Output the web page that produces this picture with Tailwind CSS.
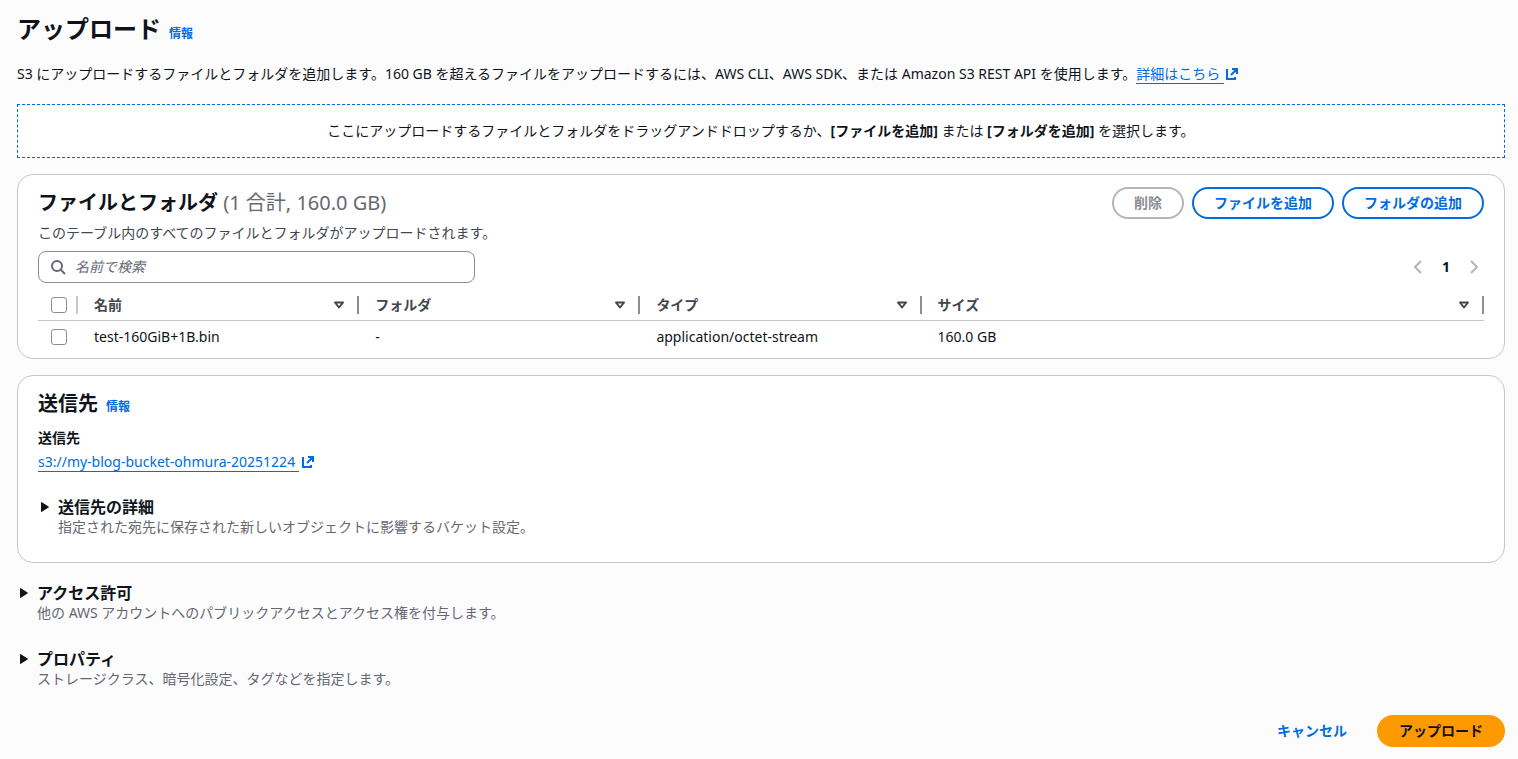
<!DOCTYPE html>
<html lang="ja">
<head>
<meta charset="utf-8">
<meta name="viewport" content="width=device-width, initial-scale=1">
<title>アップロード</title>
<script src="https://cdn.jsdelivr.net/npm/@tailwindcss/browser@4"></script>
</head>
<body class="min-h-screen bg-[#fcfcfd] pl-[17px] pr-[13px] pb-3 font-['Noto_Sans','Noto_Sans_CJK_JP',sans-serif] text-sm leading-5 text-[#0f141a]">
<svg class="hidden">
  <symbol id="external" viewBox="0 0 14 14"><path d="M7 2h5v5M12 2 6 8M3 3H2v9h8v-2" fill="none" stroke="currentColor" stroke-width="2"/></symbol>
  <symbol id="sort" viewBox="0 0 16 16"><path d="M4 5.5h8l-4 5z" fill="none" stroke="currentColor" stroke-width="2" stroke-linejoin="round"/></symbol>
  <symbol id="caret" viewBox="0 0 16 16"><path d="M3.500 3.500v9l7-4.500z" fill="currentColor" stroke="currentColor" stroke-linejoin="round"/></symbol>
</svg>
<main>
  <header class="flex items-baseline gap-2 pt-[13px]">
    <h1 class="text-2xl leading-8 font-bold">アップロード</h1>
    <a href="#" class="text-xs font-semibold text-[#006ce0]">情報</a>
  </header>
  <p class="mt-[19px]">S3 にアップロードするファイルとフォルダを追加します。160 GB を超えるファイルをアップロードするには、AWS CLI、AWS SDK、または Amazon S3 REST API を使用します。<a href="#" class="inline-flex items-center text-[#006ce0]"><span class="border-b border-current pr-1 leading-[18px]">詳細はこちら</span><svg class="mb-[2px] ml-px size-3.5"><use href="#external"/></svg></a></p>

  <div class="mt-5 border border-dashed border-[#006ce0] bg-white py-4 text-center">ここにアップロードするファイルとフォルダをドラッグアンドドロップするか、<b>[ファイルを追加]</b> または <b>[フォルダを追加]</b> を選択します。</div>

  <section class="mt-4 rounded-2xl border border-[#c6c6cd] bg-white px-5 pt-3 pb-[5px]">
    <div class="flex items-center justify-between">
      <h2 class="text-xl leading-8 font-bold">ファイルとフォルダ <span class="font-normal text-[#656871]">(1 合計, 160.0 GB)</span></h2>
      <div class="flex gap-2 font-bold">
        <button disabled class="h-8 rounded-full border-2 border-[#b4b4bb] px-5 text-[#8c8c94]">削除</button>
        <button class="h-8 rounded-full border-2 border-[#006ce0] px-5 text-[#006ce0]">ファイルを追加</button>
        <button class="h-8 rounded-full border-2 border-[#006ce0] px-5 text-[#006ce0]">フォルダの追加</button>
      </div>
    </div>
    <p class="mt-1 text-[#424650]">このテーブル内のすべてのファイルとフォルダがアップロードされます。</p>
    <div class="mt-2 flex items-center justify-between">
      <label class="flex h-8 w-[437px] items-center gap-2 rounded-lg border border-[#8c8c94] bg-white px-3">
        <svg class="size-4 shrink-0 text-[#656871]" viewBox="0 0 16 16" fill="none" stroke="currentColor" stroke-width="2"><circle cx="6" cy="7" r="5"/><path d="m9.5 10.500 4.500 4.500"/></svg>
        <input type="search" aria-label="名前で検索" placeholder="名前で検索" class="min-w-0 flex-1 outline-none placeholder:italic placeholder:text-[#656871]">
      </label>
      <nav class="flex items-center" aria-label="ページ">
        <button disabled aria-label="前のページ" class="px-1 text-[#b4b4bb]"><svg class="size-4" viewBox="0 0 16 16" fill="none" stroke="currentColor" stroke-width="2"><path d="m11 2-6 6 6 6"/></svg></button>
        <button aria-current="page" class="w-8 font-bold">1</button>
        <button disabled aria-label="次のページ" class="pl-1 pr-[2px] text-[#b4b4bb]"><svg class="size-4" viewBox="0 0 16 16" fill="none" stroke="currentColor" stroke-width="2"><path d="m5 2 6 6-6 6"/></svg></button>
      </nav>
    </div>
    <table class="mt-2 w-full table-fixed border-collapse text-left">
      <colgroup><col class="w-10"><col class="w-1/5"><col class="w-1/5"><col class="w-1/5"><col class="w-2/5"></colgroup>
      <thead class="text-[#424650]">
        <tr class="h-[29px] border-b border-[#c6c6cd]">
          <th class="p-0"><div class="flex h-[18px] items-center border-r-2 border-[#c6c6cd] pl-[13px]"><input type="checkbox" aria-label="すべて選択" class="size-4 appearance-none rounded-[3px] border border-[#8c8c94] bg-white"></div></th>
          <th class="p-0"><div class="flex h-[18px] items-center justify-between border-r-2 border-[#8c8c94] pl-4 pr-[10px]">名前<svg class="size-4"><use href="#sort"/></svg></div></th>
          <th class="p-0"><div class="flex h-[18px] items-center justify-between border-r-2 border-[#8c8c94] pl-4 pr-[10px]">フォルダ<svg class="size-4"><use href="#sort"/></svg></div></th>
          <th class="p-0"><div class="flex h-[18px] items-center justify-between border-r-2 border-[#8c8c94] pl-4 pr-[10px]">タイプ<svg class="size-4"><use href="#sort"/></svg></div></th>
          <th class="p-0"><div class="flex h-[18px] items-center justify-between border-r-2 border-[#8c8c94] pl-4 pr-[10px]">サイズ<svg class="size-4"><use href="#sort"/></svg></div></th>
        </tr>
      </thead>
      <tbody>
        <tr class="h-[33px]">
          <td class="p-0 pl-[13px]"><input type="checkbox" aria-label="test-160GiB+1B.bin を選択" class="block size-4 appearance-none rounded-[3px] border border-[#8c8c94] bg-white"></td>
          <td class="p-0 pl-4">test-160GiB+1B.bin</td>
          <td class="p-0 pl-4">-</td>
          <td class="p-0 pl-4">application/octet-stream</td>
          <td class="p-0 pl-4">160.0 GB</td>
        </tr>
      </tbody>
    </table>
  </section>

  <section class="mt-4 rounded-2xl border border-[#c6c6cd] bg-white px-5 pt-3 pb-[25px]">
    <div class="flex items-baseline gap-2">
      <h2 class="text-xl leading-8 font-bold">送信先</h2>
      <a href="#" class="text-xs font-semibold text-[#006ce0]">情報</a>
    </div>
    <h3 class="mt-2 font-bold">送信先</h3>
    <p class="mt-1"><a href="#" class="inline-flex items-center text-[#006ce0]"><span class="border-b border-current pr-1 leading-[18px]">s3://my-blog-bucket-ohmura-20251224</span><svg class="mb-[2px] ml-[2px] size-3.5"><use href="#external"/></svg></a></p>
    <details class="mt-[25px]">
      <summary class="flex cursor-pointer list-none">
        <svg class="mt-[2px] mr-1 size-4 shrink-0"><use href="#caret"/></svg>
        <span><span class="block text-base leading-5 font-bold">送信先の詳細</span><span class="block text-[#656871]">指定された宛先に保存された新しいオブジェクトに影響するバケット設定。</span></span>
      </summary>
    </details>
  </section>

  <details class="mt-5">
    <summary class="flex cursor-pointer list-none">
      <svg class="mt-[2px] mr-1 size-4 shrink-0"><use href="#caret"/></svg>
      <span><span class="block text-base leading-5 font-bold">アクセス許可</span><span class="block text-[#656871]">他の AWS アカウントへのパブリックアクセスとアクセス権を付与します。</span></span>
    </summary>
  </details>
  <details class="mt-[26px]">
    <summary class="flex cursor-pointer list-none">
      <svg class="mt-[2px] mr-1 size-4 shrink-0"><use href="#caret"/></svg>
      <span><span class="block text-base leading-5 font-bold">プロパティ</span><span class="block text-[#656871]">ストレージクラス、暗号化設定、タグなどを指定します。</span></span>
    </summary>
  </details>

  <footer class="mt-[26px] flex justify-end gap-2 font-bold">
    <button class="h-8 px-[22px] text-[#006ce0]">キャンセル</button>
    <button class="h-8 rounded-full bg-[#ff9900] px-[22px]">アップロード</button>
  </footer>
</main>
</body>
</html>
